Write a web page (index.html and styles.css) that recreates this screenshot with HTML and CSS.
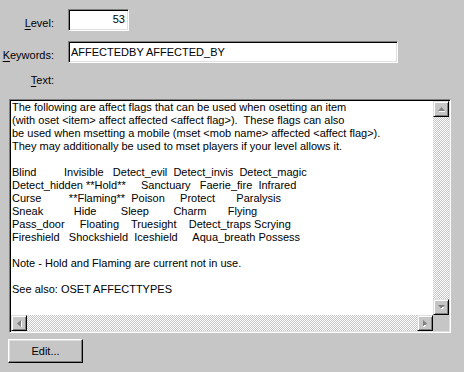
FILE: index.html
```html
<!DOCTYPE html>
<html lang="en">
<head>
  <meta charset="UTF-8">
  <title>Edit Help Entry</title>
  <link rel="stylesheet" href="styles.css">
</head>
<body>
  <div class="dialog">
    <div class="field field-level">
      <label class="lbl"><u>L</u>evel:</label>
      <div class="edit edit-num">53</div>
    </div>
    <div class="field field-keywords">
      <label class="lbl"><u>K</u>eywords:</label>
      <div class="edit edit-wide">AFFECTEDBY AFFECTED_BY</div>
    </div>
    <div class="field field-text">
      <label class="lbl"><u>T</u>ext:</label>
    </div>

    <div class="memo">
      <div class="memo-text">The following are affect flags that can be used when osetting an item
(with oset &lt;item&gt; affect affected &lt;affect flag&gt;).  These flags can also
be used when msetting a mobile (mset &lt;mob name&gt; affected &lt;affect flag&gt;).
They may additionally be used to mset players if your level allows it.

Blind         Invisible   Detect_evil  Detect_invis  Detect_magic
Detect_hidden **Hold**     Sanctuary   Faerie_fire  Infrared
Curse         **Flaming**  Poison     Protect       Paralysis
Sneak          Hide        Sleep        Charm       Flying
Pass_door     Floating    Truesight    Detect_traps Scrying
Fireshield   Shockshield  Iceshield     Aqua_breath Possess

Note - Hold and Flaming are current not in use.

See also: OSET AFFECTTYPES</div>
      <div class="vscroll">
        <div class="sbtn">
          <svg width="7" height="5" viewBox="0 0 7 5"><path d="M1 4h6M3 1h1v3" fill="none"/><polygon points="3.5,0 7,4 0,4" fill="#808080"/><rect x="1" y="4" width="6" height="1" fill="#fff"/></svg>
        </div>
        <div class="track"></div>
        <div class="sbtn">
          <svg width="7" height="5" viewBox="0 0 7 5"><polygon points="0,0 7,0 3.5,4" fill="#808080"/><rect x="4" y="2" width="2" height="1" fill="#fff"/><rect x="3" y="3" width="2" height="1" fill="#fff"/></svg>
        </div>
      </div>
      <div class="hscroll">
        <div class="sbtn">
          <svg width="5" height="7" viewBox="0 0 5 7"><polygon points="4,0 4,7 0,3.5" fill="#808080"/><rect x="4" y="1" width="1" height="6" fill="#fff"/></svg>
        </div>
        <div class="track"></div>
        <div class="sbtn">
          <svg width="5" height="7" viewBox="0 0 5 7"><polygon points="0,0 4,3.5 0,7" fill="#808080"/><rect x="1" y="5" width="2" height="1" fill="#fff"/><rect x="0" y="6" width="2" height="1" fill="#fff"/></svg>
        </div>
      </div>
      <div class="corner"></div>
    </div>

    <button class="btn">Edit...</button>
  </div>
</body>
</html>
```

FILE: styles.css
```css
body {
  margin: 0;
  padding: 0;
  background: #c6c6c6;
  font-family: "Liberation Sans", Arial, sans-serif;
  font-size: 11px;
  line-height: 13px;
  color: #000;
}
.dialog {
  width: 464px;
  height: 372px;
  padding-top: 9px;
  box-sizing: border-box;
  display: flex;
  flex-direction: column;
  align-items: flex-start;
}
.field {
  display: flex;
  align-items: flex-start;
}
.field-keywords {
  margin-top: 10px;
}
.field-text {
  margin-top: 11px;
}
.lbl {
  width: 54px;
  margin-right: 14px;
  text-align: right;
  margin-top: 8px;
}
.field-text .lbl {
  margin-top: 0;
}
.lbl u {
  text-decoration: underline;
  text-underline-offset: 2px;
}
.edit {
  height: 22px;
  box-sizing: border-box;
  background: #fff;
  border: 1px solid;
  border-color: #808080 #fff #fff #808080;
  box-shadow: inset 1px 1px #000, inset -1px -1px #dfdfdf;
  padding: 2px 3px 0 3px;
  white-space: nowrap;
}
.edit-num {
  width: 61px;
  text-align: right;
  padding-top: 3px;
}
.edit-wide {
  width: 330px;
  padding-top: 4px;
  padding-left: 2px;
}
.memo {
  margin: 12px 0 0 9px;
  width: 442px;
  height: 234px;
  box-sizing: border-box;
  background: #fff;
  border: 1px solid;
  border-color: #808080 #fff #fff #808080;
  box-shadow: inset 1px 1px #000, inset -1px -1px #dfdfdf;
  padding: 1px;
  display: grid;
  grid-template-columns: 1fr 16px;
  grid-template-rows: 1fr 16px;
}
.memo-text {
  white-space: pre;
  overflow: hidden;
  padding: 0 0 0 1px;
}
.vscroll {
  display: flex;
  flex-direction: column;
}
.hscroll {
  display: flex;
}
.track {
  flex: 1;
  background: repeating-conic-gradient(#c6c6c6 0% 25%, #fff 0% 50%) 0 0 / 2px 2px;
}
.sbtn {
  width: 16px;
  height: 16px;
  box-sizing: border-box;
  background: #c6c6c6;
  border: 1px solid;
  border-color: #dfdfdf #000 #000 #dfdfdf;
  box-shadow: inset 1px 1px #fff, inset -1px -1px #808080;
  display: flex;
  align-items: center;
  justify-content: center;
}
.corner {
  background: #c6c6c6;
}
.btn {
  margin: 6px 0 0 8px;
  width: 75px;
  height: 24px;
  background: #c6c6c6;
  border: 1px solid;
  border-color: #fff #000 #000 #fff;
  box-shadow: inset -1px -1px #808080, inset 1px 1px #dfdfdf;
  font-family: "Liberation Sans", Arial, sans-serif;
  font-size: 11px;
  color: #000;
  padding: 0;
}
```
